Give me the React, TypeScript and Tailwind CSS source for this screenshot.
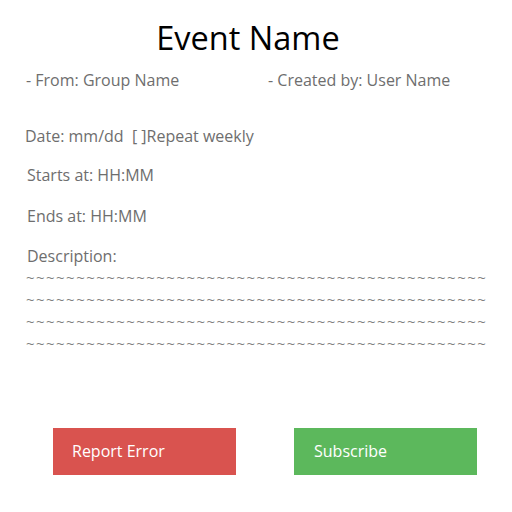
const tildes = "~".repeat(46);

export default function App() {
  return (
    <div className="w-[512px] h-[512px] bg-white text-[#6e6e6e] font-['Open_Sans',sans-serif] flex flex-col">
      <h1 className="text-black text-[32.5px] leading-none text-center pt-[22px] mr-[16px]">Event Name</h1>
      <div className="flex mt-[18px] text-[16px] leading-[15px]">
        <div className="pl-[26px] w-[268px]">- From: Group Name</div>
        <div>- Created by: User Name</div>
      </div>
      <div className="pl-[25px] mt-[41px] text-[16px] leading-[15px]">Date: mm/dd&nbsp;&nbsp;[ ]Repeat weekly</div>
      <div className="pl-[27px] mt-[24px] text-[16px] leading-[15px]">Starts at: HH:MM</div>
      <div className="pl-[27px] mt-[26px] text-[16px] leading-[15px]">Ends at: HH:MM</div>
      <div className="pl-[27px] mt-[25px] text-[16px] leading-[15px]">Description:</div>
      <div className="pl-[26px] mt-[2px] flex flex-col text-[15px] leading-[22px] tracking-[1.45px] text-[#808080]">
        <div className="w-[464px] overflow-hidden whitespace-nowrap">{tildes}</div>
        <div className="w-[464px] overflow-hidden whitespace-nowrap">{tildes}</div>
        <div className="w-[464px] overflow-hidden whitespace-nowrap">{tildes}</div>
        <div className="w-[464px] overflow-hidden whitespace-nowrap">{tildes}</div>
      </div>
      <div className="flex mt-auto mb-[37px] pl-[53px] gap-[58px]">
        <button className="w-[183px] h-[47px] bg-[#d9534f] text-white text-[16px] text-left pl-[19px] pb-[2px]">Report Error</button>
        <button className="w-[183px] h-[47px] bg-[#5cb85c] text-white text-[16px] text-left pl-[20px] pb-[2px]">Subscribe</button>
      </div>
    </div>
  );
}
